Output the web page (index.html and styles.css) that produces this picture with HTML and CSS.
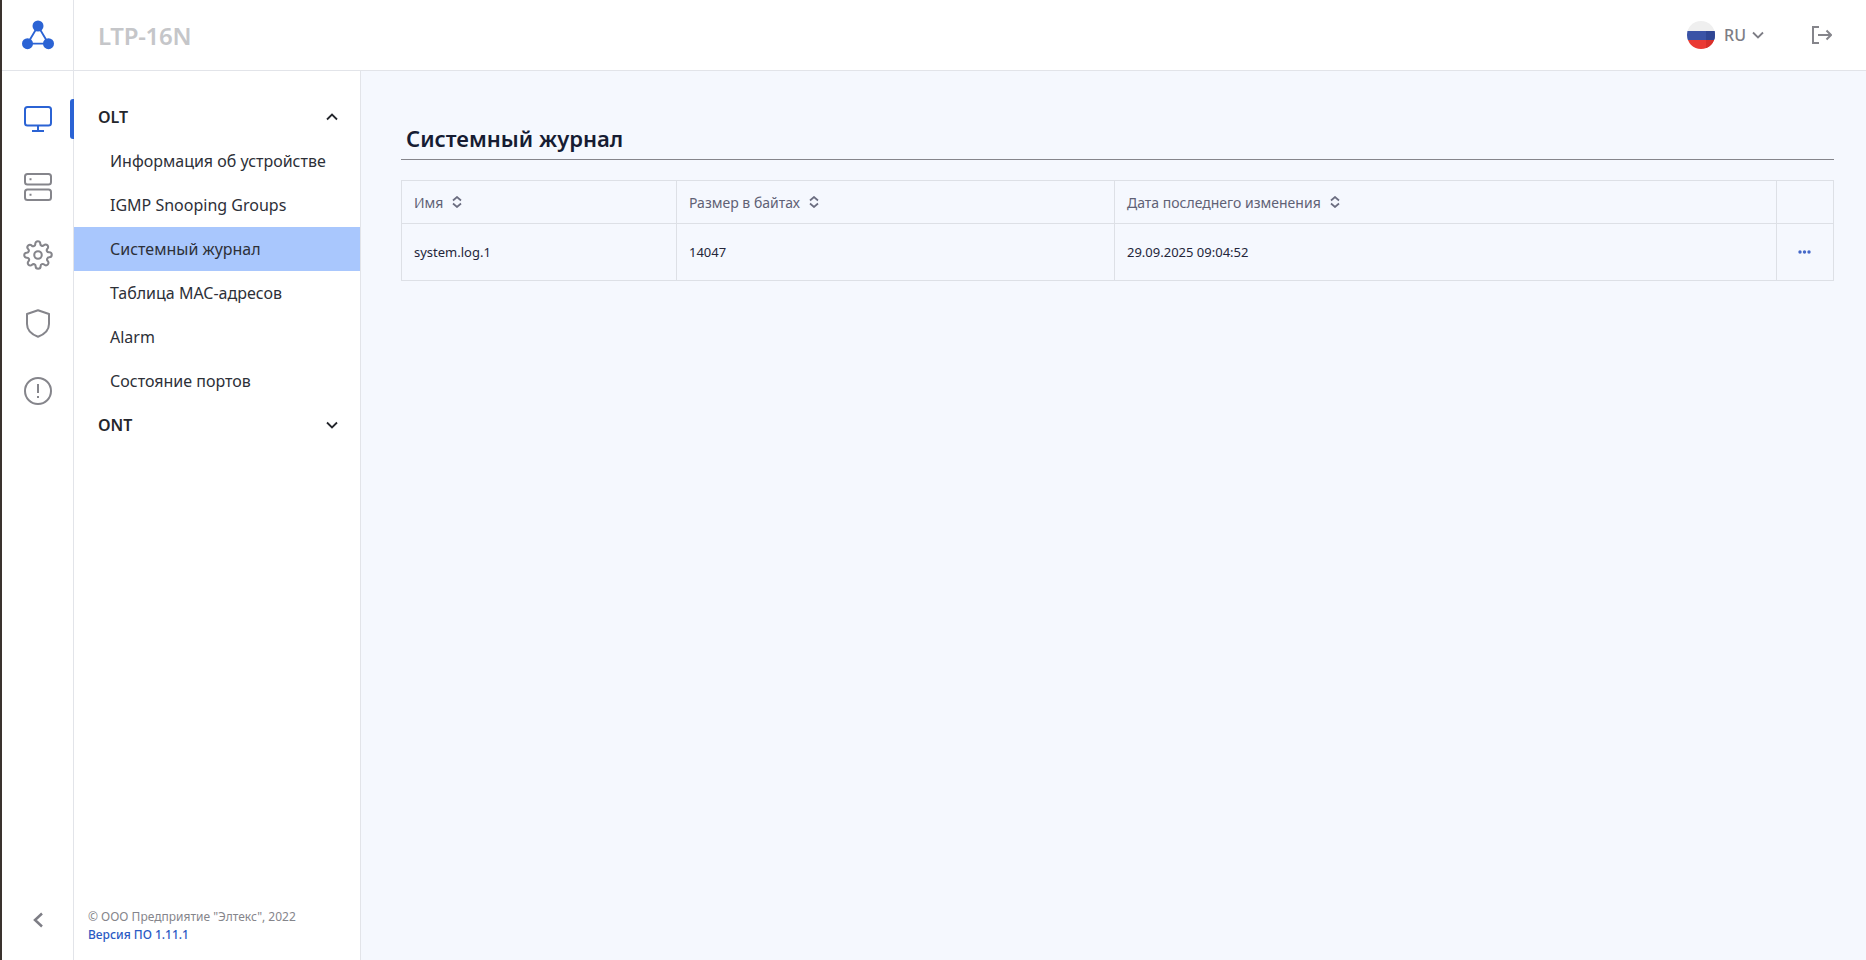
FILE: index.html
```html
<!DOCTYPE html>
<html lang="ru">
<head>
<meta charset="utf-8">
<title>LTP-16N</title>
<link rel="stylesheet" href="styles.css">
</head>
<body>
<div class="app">
  <header class="topbar">
    <div class="logo-cell">
      <svg width="32" height="30" viewBox="0 0 32 30" fill="none">
        <path d="M16 6L5.500 23.700H26.500Z" stroke="#2b63d4" stroke-width="1.800"/>
        <circle cx="16" cy="6" r="5.500" fill="#2b63d4"/>
        <circle cx="5.500" cy="23.700" r="5.500" fill="#2b63d4"/>
        <circle cx="26.500" cy="23.700" r="5.500" fill="#2b63d4"/>
      </svg>
    </div>
    <div class="device">LTP-16N</div>
    <div class="lang">
      <svg class="flag" width="28" height="28" viewBox="0 0 28 28">
        <defs><clipPath id="fc"><circle cx="14" cy="14" r="14"/></clipPath></defs>
        <g clip-path="url(#fc)">
          <rect width="28" height="10" fill="#efefef"/>
          <rect y="10" width="28" height="9" fill="#3a53a6"/>
          <rect x="19" y="10" width="9" height="9" fill="#2f4694"/>
          <rect y="19" width="28" height="9" fill="#ea3a34"/>
          <rect x="19" y="19" width="9" height="9" fill="#d8302b"/>
        </g>
      </svg>
      <span class="lang-code">RU</span>
      <svg width="12" height="8" viewBox="0 0 12 8" fill="none"><path d="M1 1.500L6 6.500L11 1.500" stroke="#7d7d85" stroke-width="1.800"/></svg>
    </div>
    <svg class="logout" width="20" height="18" viewBox="0 0 20 18" fill="none">
      <path d="M7 1H1V17H7" stroke="#85858b" stroke-width="2"/>
      <path d="M6 9H19M14.500 4.500L19 9L14.500 13.500" stroke="#85858b" stroke-width="2"/>
    </svg>
  </header>
  <nav class="rail">
    <div class="rail-icons">
      <div class="rail-item active">
        <svg width="28" height="26" viewBox="0 0 28 26" fill="none" stroke="#2b63d4" stroke-width="2">
          <rect x="1" y="1" width="26" height="18.500" rx="2.500"/>
          <path d="M14 19.500V25M8 25H20"/>
        </svg>
      </div>
      <div class="rail-item">
        <svg width="28" height="28" viewBox="0 0 28 28" fill="none" stroke="#85858b" stroke-width="2">
          <rect x="1" y="1" width="26" height="10.500" rx="2.500"/>
          <rect x="1" y="16.500" width="26" height="10.500" rx="2.500"/>
          <path d="M5.500 6.250H7.500M5.500 21.750H7.500"/>
        </svg>
      </div>
      <div class="rail-item">
        <svg width="30" height="30" viewBox="0 0 24 24" fill="none" stroke="#85858b" stroke-width="1.650" stroke-linejoin="round">
          <circle cx="12" cy="12" r="3"/>
          <path d="M19.400 15a1.650 1.650 0 0 0 .33 1.820l.06.06a2 2 0 1 1-2.830 2.830l-.06-.06a1.650 1.650 0 0 0-2.800 1.170V21a2 2 0 1 1-4 0v-.09a1.650 1.650 0 0 0-2.820-1.110l-.06.06a2 2 0 1 1-2.830-2.830l.06-.06a1.650 1.650 0 0 0-1.170-2.800H3a2 2 0 1 1 0-4h.09A1.650 1.650 0 0 0 4.200 7.350l-.06-.06a2 2 0 1 1 2.830-2.830l.06.06a1.650 1.650 0 0 0 2.800-1.170V3a2 2 0 1 1 4 0v.09a1.650 1.650 0 0 0 2.820 1.110l.06-.06a2 2 0 1 1 2.830 2.830l-.06.06a1.650 1.650 0 0 0 1.170 2.800H21a2 2 0 1 1 0 4h-.09a1.650 1.650 0 0 0-1.510 1.170z"/>
        </svg>
      </div>
      <div class="rail-item">
        <svg width="24" height="29" viewBox="0 0 24 29" fill="none" stroke="#85858b" stroke-width="2">
          <path d="M12 1.200L23 5V15C23 21 18 25.500 12 27.800C6 25.500 1 21 1 15V5Z" stroke-linejoin="round"/>
        </svg>
      </div>
      <div class="rail-item">
        <svg width="28" height="28" viewBox="0 0 28 28" fill="none" stroke="#85858b" stroke-width="2">
          <circle cx="14" cy="14" r="13"/>
          <path d="M14 7V16M14 19V21"/>
        </svg>
      </div>
    </div>
    <div class="collapse">
      <svg width="12" height="16" viewBox="0 0 12 16" fill="none"><path d="M10 1.500L3 8L10 14.500" stroke="#7d7d85" stroke-width="2.500"/></svg>
    </div>
  </nav>
  <aside class="sidebar">
    <div class="menu">
      <div class="group">OLT
        <svg width="12" height="8" viewBox="0 0 12 8" fill="none"><path d="M1 6.500L6 1.500L11 6.500" stroke="#24262c" stroke-width="1.800"/></svg>
      </div>
      <div class="item">Информация об устройстве</div>
      <div class="item">IGMP Snooping Groups</div>
      <div class="item selected">Системный журнал</div>
      <div class="item">Таблица MAC-адресов</div>
      <div class="item">Alarm</div>
      <div class="item">Состояние портов</div>
      <div class="group">ONT
        <svg width="12" height="8" viewBox="0 0 12 8" fill="none"><path d="M1 1.500L6 6.500L11 1.500" stroke="#24262c" stroke-width="1.800"/></svg>
      </div>
    </div>
    <footer class="foot">
      <div class="copy">© ООО Предприятие "Элтекс", 2022</div>
      <div class="ver">Версия ПО 1.11.1</div>
    </footer>
  </aside>
  <main class="main">
    <h1 class="title">Системный журнал</h1>
    <div class="table">
      <div class="th">Имя <svg class="sort" width="10" height="12" viewBox="0 0 10 12" fill="none"><path d="M1 4.500L5 1L9 4.500M1 7.500L5 11L9 7.500" stroke="#6b6d80" stroke-width="1.700"/></svg></div>
      <div class="th">Размер в байтах <svg class="sort" width="10" height="12" viewBox="0 0 10 12" fill="none"><path d="M1 4.500L5 1L9 4.500M1 7.500L5 11L9 7.500" stroke="#6b6d80" stroke-width="1.700"/></svg></div>
      <div class="th">Дата последнего изменения <svg class="sort" width="10" height="12" viewBox="0 0 10 12" fill="none"><path d="M1 4.500L5 1L9 4.500M1 7.500L5 11L9 7.500" stroke="#6b6d80" stroke-width="1.700"/></svg></div>
      <div class="th"></div>
      <div class="td">system.log.1</div>
      <div class="td">14047</div>
      <div class="td">29.09.2025 09:04:52</div>
      <div class="td dots"><svg width="13" height="4" viewBox="0 0 13 4"><circle cx="2" cy="2" r="1.700" fill="#4468c8"/><circle cx="6.500" cy="2" r="1.700" fill="#4468c8"/><circle cx="11" cy="2" r="1.700" fill="#4468c8"/></svg></div>
    </div>
  </main>
</div>
</body>
</html>
```
FILE: styles.css
```css
* { box-sizing: border-box; }
html, body { margin: 0; height: 100%; }
body {
  font-family: "Noto Sans", sans-serif;
  background: #fff;
  color: #24262c;
  overflow: hidden;
}
.app {
  height: 960px;
  border-left: 2px solid #3a322e;
  display: grid;
  grid-template-columns: 72px 287px 1fr;
  grid-template-rows: 71px 1fr;
}
.topbar {
  grid-column: 1 / 4;
  display: flex;
  align-items: center;
  background: #fff;
  border-bottom: 1px solid #e2e4e9;
}
.logo-cell {
  width: 72px;
  height: 70px;
  border-right: 1px solid #e2e4e9;
  display: flex;
  align-items: center;
  justify-content: center;
}
.device {
  margin-left: 24px;
  font-size: 24px;
  letter-spacing: -0.3px;
  font-weight: 600;
  color: #c5c6c9;
  flex: 1;
}
.lang {
  display: flex;
  align-items: center;
  color: #7d7d85;
  font-size: 16px;
  font-weight: 500;
}
.flag { margin-right: 9px; }
.lang-code { margin-right: 6px; }
.logout { margin: 0 34px 0 48px; }
.rail {
  border-right: 1px solid #e2e4e9;
  display: flex;
  flex-direction: column;
  justify-content: space-between;
}
.rail-icons { padding-top: 14px; }
.rail-item {
  height: 68px;
  display: flex;
  align-items: center;
  justify-content: center;
  position: relative;
}
.rail-item.active::after {
  content: "";
  position: absolute;
  right: -1px;
  top: 14px;
  width: 4px;
  height: 40px;
  background: #2b63d4;
  border-radius: 3px 0 0 3px;
}
.collapse {
  height: 48px;
  margin-bottom: 16px;
  display: flex;
  align-items: center;
  justify-content: center;
}
.sidebar {
  background: #fff;
  border-right: 1px solid #e2e4e9;
  display: flex;
  flex-direction: column;
  justify-content: space-between;
}
.menu { padding-top: 24px; }
.group {
  height: 44px;
  padding: 0 22px 0 24px;
  display: flex;
  align-items: center;
  justify-content: space-between;
  font-size: 16px;
  font-weight: 600;
}
.item {
  height: 44px;
  padding-left: 36px;
  display: flex;
  align-items: center;
  font-size: 16px;
  color: #2d3038;
}
.item.selected { background: #a9c7fd; }
.foot {
  padding: 0 0 16px 14px;
  font-size: 12px;
  line-height: 18px;
}
.copy { color: #85858b; }
.ver { color: #2b5bc4; font-weight: 500; }
.main {
  background: #f5f8fe;
  padding: 50px 32px 0 40px;
}
.title {
  margin: 0;
  height: 39px;
  padding-left: 5px;
  font-size: 22px;
  line-height: 34px;
  font-weight: 600;
  color: #161c33;
  border-bottom: 1px solid #85858b;
}
.table {
  margin-top: 20px;
  display: grid;
  grid-template-columns: 275px 438px 662px 57px;
  grid-template-rows: 43px 57px;
  border-top: 1px solid #dde0e6;
  border-left: 1px solid #dde0e6;
}
.th, .td {
  border-right: 1px solid #dde0e6;
  border-bottom: 1px solid #dde0e6;
  padding-left: 12px;
  display: flex;
  align-items: center;
}
.th { color: #5f6175; font-size: 14px; font-weight: 400; }
.td { color: #24263a; font-size: 13px; }
.sort { margin-left: 9px; }
.dots { padding-left: 21px; }
```
